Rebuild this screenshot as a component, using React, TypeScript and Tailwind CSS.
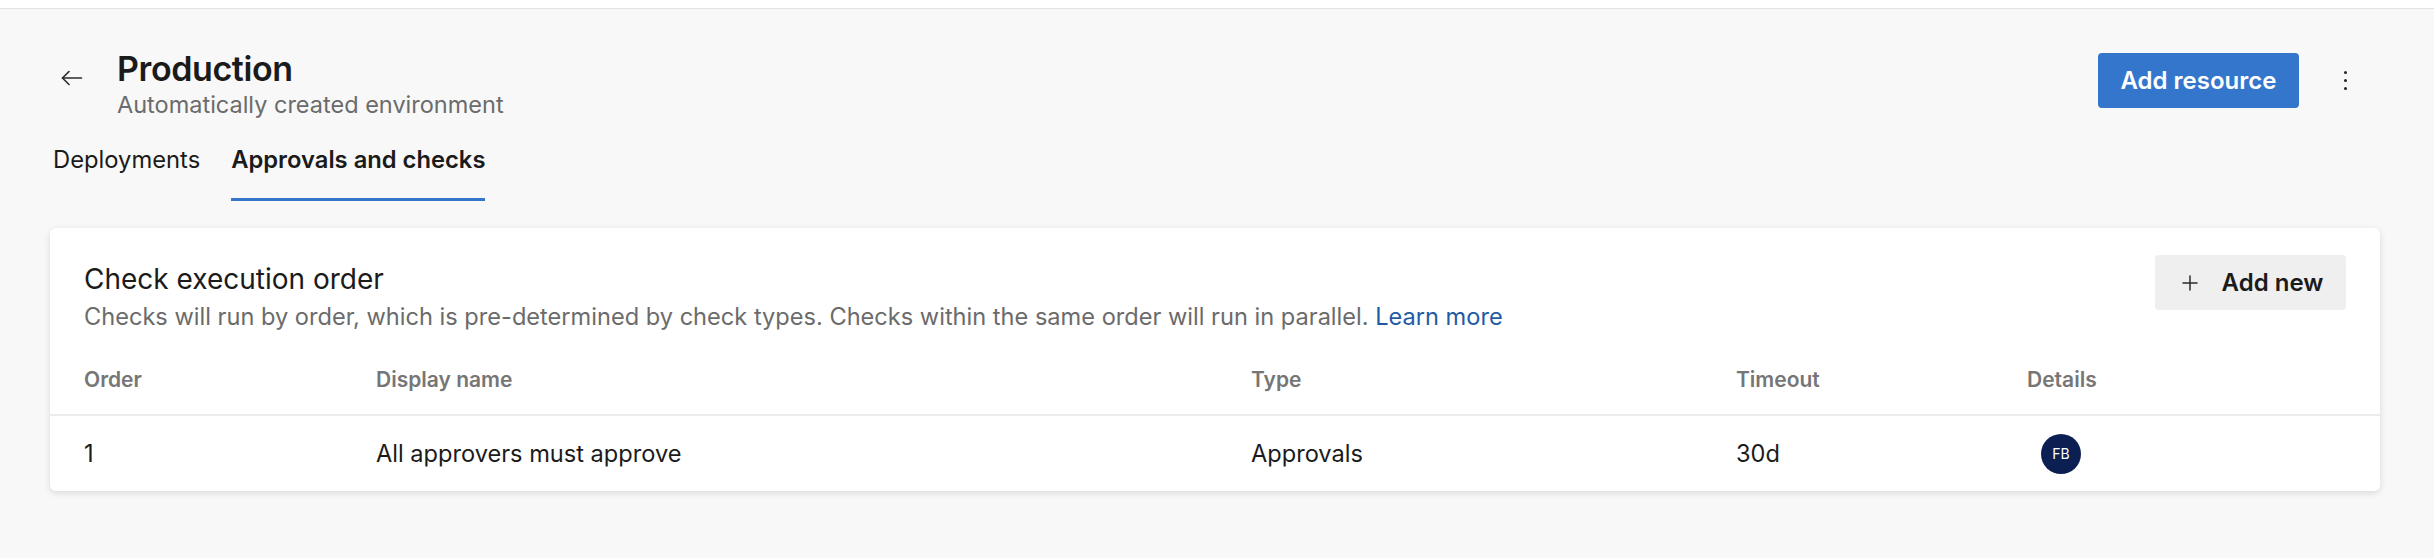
import { Plus } from "lucide-react";

const columns = "grid grid-cols-[292px_875px_485px_291px_1fr]";

function BackArrow() {
    return (
        <svg width="22" height="16" viewBox="0 0 22 16" fill="none" stroke="#2b2b2b" strokeWidth="1.6" strokeLinecap="round" strokeLinejoin="round">
            <path d="M8 1.5 L1.5 8 L8 14.5" />
            <path d="M1.5 8 H20.5" />
        </svg>
    );
}

function Kebab() {
    return (
        <div className="flex flex-col items-center gap-[5px] px-3 py-1">
            <span className="block h-[3px] w-[3px] rounded-full bg-[#222]" />
            <span className="block h-[3px] w-[3px] rounded-full bg-[#222]" />
            <span className="block h-[3px] w-[3px] rounded-full bg-[#222]" />
        </div>
    );
}

function App() {
    return (
        <div className="min-h-[558px] bg-[#f8f8f8] font-['Inter',sans-serif] text-[#1b1b1b]">
            <div className="h-[9px] border-b border-[#e3e3e3] bg-white" />

            {/* page header */}
            <div className="flex items-start justify-between pt-[38px] pl-[61px] pr-[75px]">
                <div className="flex items-start">
                    <div className="mt-[23px] mr-[34px]">
                        <BackArrow />
                    </div>
                    <div>
                        <h1 className="text-[34px] leading-[44px] font-semibold tracking-[-0.4px]">Production</h1>
                        <p className="text-[23.5px] leading-[28px] text-[#6b6b6b]">Automatically created environment</p>
                    </div>
                </div>
                <div className="flex items-center gap-[33px] mt-[6px]">
                    <button className="h-[55px] w-[201px] rounded-[4px] bg-[#3476cc] text-[24px] font-semibold text-white">
                        Add resource
                    </button>
                    <Kebab />
                </div>
            </div>

            {/* tabs */}
            <div className="mt-[27px] flex gap-[31px] pl-[53px] text-[23.75px] leading-[28px]">
                <div className="pb-[27px]">Deployments</div>
                <div className="border-b-[3px] border-[#3476cc] pb-[24px] font-semibold">Approvals and checks</div>
            </div>

            {/* check execution order card */}
            <div className="mt-[27px] ml-[50px] mr-[54px] rounded-[6px] bg-white shadow-[0_2px_7px_rgba(0,0,0,0.13)]">
                <div className="flex items-start justify-between pl-[34px] pr-[34px] pt-[27px]">
                    <div className="pt-[8px]">
                        <h2 className="text-[28px] leading-[32px]">Check execution order</h2>
                        <p className="mt-[8px] text-[23.6px] leading-[28px] text-[#6b6b6b]">
                            Checks will run by order, which is pre-determined by check types. Checks within the same order will run in parallel.{" "}
                            <a className="text-[#1f5ba5]">Learn more</a>
                        </p>
                    </div>
                    <button className="flex h-[55px] w-[191px] items-center justify-center gap-[20px] rounded-[4px] bg-[#efefef] text-[24px] font-semibold">
                        <Plus size={24} strokeWidth={1.5} color="#2b2b2b" />
                        Add new
                    </button>
                </div>

                <div className={`${columns} mt-[36px] border-b-2 border-[#ececec] pb-[21px] pl-[34px] text-[21px] leading-[26px] font-semibold text-[#767676]`}>
                    <div>Order</div>
                    <div>Display name</div>
                    <div>Type</div>
                    <div>Timeout</div>
                    <div>Details</div>
                </div>

                <div className={`${columns} h-[75px] items-center pl-[34px] text-[23.6px] leading-[28px]`}>
                    <div>1</div>
                    <div>All approvers must approve</div>
                    <div>Approvals</div>
                    <div>30d</div>
                    <div className="pl-[14px]">
                        <div className="flex h-[40px] w-[40px] items-center justify-center rounded-full bg-[#0b1f52] text-[14px] text-white">FB</div>
                    </div>
                </div>
            </div>
        </div>
    );
}

export default App;
